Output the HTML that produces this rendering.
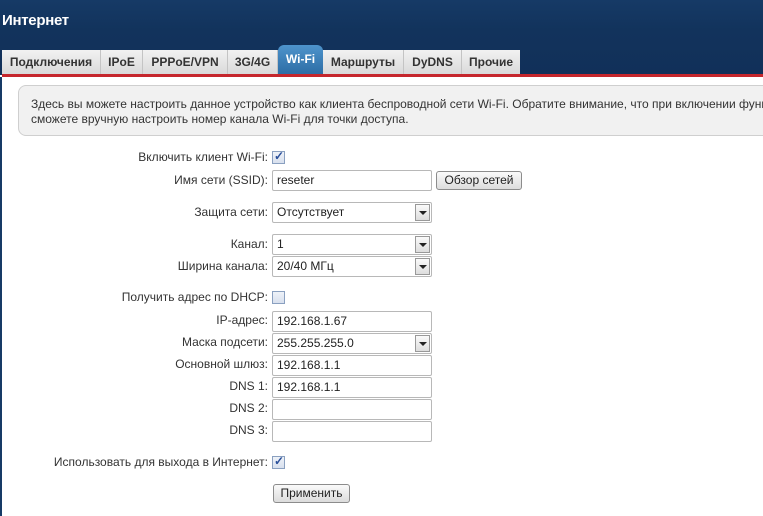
<!DOCTYPE html>
<html><head><meta charset="utf-8"><style>
*{box-sizing:border-box;margin:0;padding:0}
body{width:763px;height:516px;overflow:hidden;background:#fff;font-family:"Liberation Sans",Arial,sans-serif;font-size:12px;color:#333;position:relative}
.hdr{position:absolute;left:0;top:0;width:763px;height:75px;background:linear-gradient(#163a66,#12335c 40%,#113059)}
.title{position:absolute;left:2px;top:12px;color:#fff;font-weight:bold;font-size:15px;letter-spacing:-0.3px}
.tabs{position:absolute;left:2px;top:50px;height:25px;width:518px;background:linear-gradient(#f2f2f2,#d8d8d8)}
.tab{position:absolute;top:50px;height:25px;line-height:24px;text-align:center;color:#333;font-weight:bold;font-size:12px;border-right:1px solid #c4c4c4}
.wifi{position:absolute;left:278px;top:45px;width:45px;height:30px;border-radius:6px 6px 0 0;background:linear-gradient(#4e94cc,#2c6ca4);color:#fff;font-weight:bold;text-align:center;line-height:28px;font-size:12px}
.red{position:absolute;left:2px;top:74px;width:761px;height:3px;background:#c5262c}
.leftbar{position:absolute;left:0;top:77px;width:2px;height:439px;background:#163a66}
.info{position:absolute;left:18px;top:85px;width:760px;height:51px;border:1px solid #cfcfcf;border-radius:8px;background:#f1f1f1;padding:11px 0 0 12px;line-height:15px;color:#333;white-space:nowrap}
.lbl{position:absolute;right:495px;text-align:right;white-space:nowrap;color:#333}
.inp{position:absolute;left:272px;width:160px;height:21px;border:1px solid #b8b8b8;border-radius:2px;background:#fff;padding-left:4px;line-height:19px;color:#222;font-size:12px}
.sel .arr{position:absolute;right:1px;top:1px;width:15px;height:17px;border:1px solid #999;background:linear-gradient(#fafafa,#ddd)}
.sel .arr:after{content:"";position:absolute;left:3px;top:6px;border-left:4px solid transparent;border-right:4px solid transparent;border-top:4px solid #222}
.cb{position:absolute;left:272px;width:13px;height:13px;border:1px solid #8aa0c0;background:linear-gradient(#eef2f8,#d8e0ee)}
.cb.on:after{content:"✓";position:absolute;left:1px;top:-3px;font-size:12px;font-weight:bold;color:#2a4f9a}
.btn{position:absolute;height:19px;border:1px solid #8c8c8c;border-radius:3px;background:linear-gradient(#fafafa,#dcdcdc);text-align:center;line-height:17px;color:#222;font-size:12px}
</style></head><body>
<div class="hdr"></div>
<div class="title">Интернет</div>
<div class="tabs"></div>
<div class="tab" style="left:2px;width:99px">Подключения</div>
<div class="tab" style="left:101px;width:42px">IPoE</div>
<div class="tab" style="left:143px;width:85px">PPPoE/VPN</div>
<div class="tab" style="left:228px;width:50px">3G/4G</div>
<div class="wifi">Wi-Fi</div>
<div class="tab" style="left:323px;width:81px">Маршруты</div>
<div class="tab" style="left:404px;width:58px">DyDNS</div>
<div class="tab" style="left:462px;width:58px;border-right:none">Прочие</div>
<div class="red"></div>
<div class="leftbar"></div>
<div class="info">Здесь вы можете настроить данное устройство как клиента беспроводной сети Wi-Fi. Обратите внимание, что при включении функции<br>сможете вручную настроить номер канала Wi-Fi для точки доступа.</div>

<div class="lbl" style="top:150px">Включить клиент Wi-Fi:</div><div class="cb on" style="top:151px"></div>
<div class="lbl" style="top:173px">Имя сети (SSID):</div><div class="inp" style="top:170px">reseter</div>
<div class="btn" style="left:436px;top:171px;width:86px">Обзор сетей</div>
<div class="lbl" style="top:205px">Защита сети:</div><div class="inp sel" style="top:202px">Отсутствует<span class="arr"></span></div>
<div class="lbl" style="top:237px">Канал:</div><div class="inp sel" style="top:234px">1<span class="arr"></span></div>
<div class="lbl" style="top:259px">Ширина канала:</div><div class="inp sel" style="top:256px">20/40 МГц<span class="arr"></span></div>
<div class="lbl" style="top:290px">Получить адрес по DHCP:</div><div class="cb" style="top:291px"></div>
<div class="lbl" style="top:313px">IP-адрес:</div><div class="inp" style="top:311px">192.168.1.67</div>
<div class="lbl" style="top:335px">Маска подсети:</div><div class="inp sel" style="top:333px">255.255.255.0<span class="arr"></span></div>
<div class="lbl" style="top:357px">Основной шлюз:</div><div class="inp" style="top:355px">192.168.1.1</div>
<div class="lbl" style="top:379px">DNS 1:</div><div class="inp" style="top:377px">192.168.1.1</div>
<div class="lbl" style="top:401px">DNS 2:</div><div class="inp" style="top:399px"></div>
<div class="lbl" style="top:423px">DNS 3:</div><div class="inp" style="top:421px"></div>
<div class="lbl" style="top:455px">Использовать для выхода в Интернет:</div><div class="cb on" style="top:456px"></div>
<div class="btn" style="left:273px;top:484px;width:77px">Применить</div>
</body></html>
